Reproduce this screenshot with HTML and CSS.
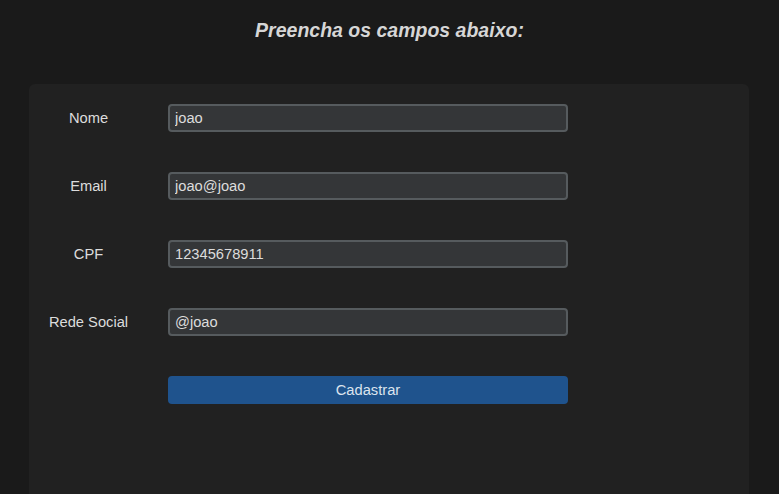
FILE: index.html
```html
<!DOCTYPE html>
<html lang="pt">
<head>
<meta charset="utf-8">
<title>Cadastro</title>
<link rel="stylesheet" href="styles.css">
</head>
<body>
<h1 class="title">Preencha os campos abaixo:</h1>
<form class="panel">
  <div class="row">
    <label class="label" for="nome">Nome</label>
    <input class="field" id="nome" type="text" value="joao">
  </div>
  <div class="row">
    <label class="label" for="email">Email</label>
    <input class="field" id="email" type="text" value="joao@joao">
  </div>
  <div class="row">
    <label class="label" for="cpf">CPF</label>
    <input class="field" id="cpf" type="text" value="12345678911">
  </div>
  <div class="row">
    <label class="label" for="rede">Rede Social</label>
    <input class="field" id="rede" type="text" value="@joao">
  </div>
  <div class="row">
    <span class="label"></span>
    <button class="submit" type="button">Cadastrar</button>
  </div>
</form>
</body>
</html>
```
FILE: styles.css
```css
html, body {
  margin: 0;
  padding: 0;
  background: #1a1a1a;
  font-family: "Liberation Sans", Arial, sans-serif;
  color: #dcdcdc;
}
.title {
  margin: 0;
  padding-top: 18px;
  height: 24px;
  line-height: 24px;
  font-size: 19.5px;
  font-weight: bold;
  font-style: italic;
  text-align: center;
  color: #d6d6d6;
}
.panel {
  margin: 42px 0 0 29px;
  width: 720px;
  min-height: 410px;
  box-sizing: border-box;
  padding-top: 20px;
  background: #212121;
  border-radius: 6px 6px 0 0;
  display: flex;
  flex-direction: column;
  gap: 40px;
}
.row {
  display: flex;
  align-items: center;
  gap: 20px;
  height: 28px;
}
.label {
  width: 119px;
  text-align: center;
  font-size: 14.7px;
  color: #dcdcdc;
}
.field {
  width: 400px;
  height: 28px;
  box-sizing: border-box;
  margin: 0;
  padding: 0 5px;
  background: #343638;
  border: 2px solid #565b5e;
  border-radius: 4px;
  color: #dcdcdc;
  font-family: "Liberation Sans", Arial, sans-serif;
  font-size: 14.7px;
  outline: none;
}
.submit {
  width: 400px;
  height: 28px;
  margin: 0;
  padding: 0;
  border: none;
  border-radius: 4px;
  background: #1f538d;
  color: #dce4ee;
  font-family: "Liberation Sans", Arial, sans-serif;
  font-size: 14.7px;
}
```
